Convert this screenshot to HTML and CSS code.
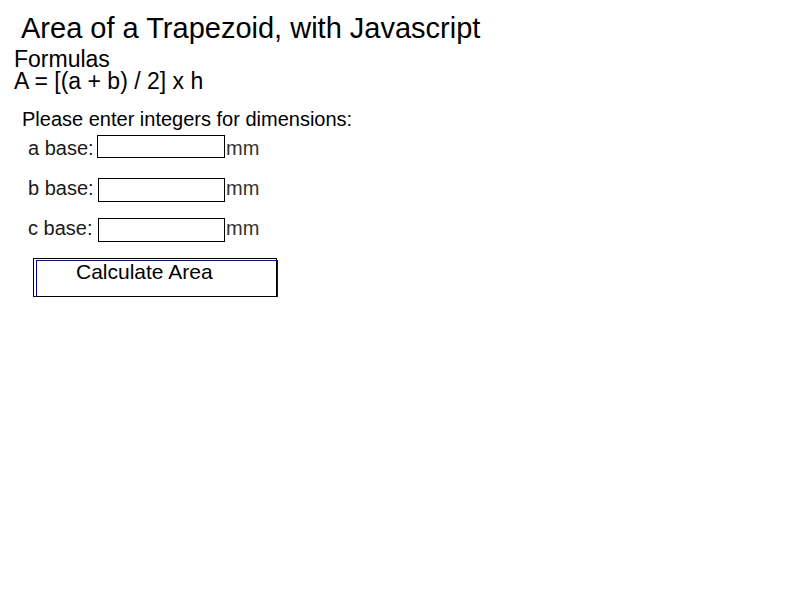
FILE: index.html
```html
<!DOCTYPE html>
<html lang="en">
<head>
<meta charset="utf-8">
<title>Area of a Trapezoid, with Javascript</title>
<link rel="stylesheet" href="styles.css">
</head>
<body>
<h1 class="title">Area of a Trapezoid, with Javascript</h1>
<div class="formulas">
  <div class="formulas-head">Formulas</div>
  <div class="formulas-line">A = [(a + b) / 2] x h</div>
</div>
<p class="prompt">Please enter integers for dimensions:</p>
<form class="dims">
  <label class="dim-label" for="a">a base:</label>
  <input class="dim-input dim-input-first" id="a" type="text">
  <span class="dim-unit">mm</span>
  <label class="dim-label" for="b">b base:</label>
  <input class="dim-input" id="b" type="text">
  <span class="dim-unit">mm</span>
  <label class="dim-label" for="c">c base:</label>
  <input class="dim-input" id="c" type="text">
  <span class="dim-unit">mm</span>
</form>
<div class="calc-wrap">
  <button class="calc" type="button">Calculate Area</button>
</div>
</body>
</html>
```
FILE: styles.css
```css
html, body {
  margin: 0;
  padding: 0;
  background: #fff;
}

body {
  font-family: "Liberation Sans", Arial, sans-serif;
  color: #000;
}

.title {
  margin: 0;
  padding: 12px 0 0 21px;
  font-size: 29px;
  font-weight: normal;
  line-height: 32px;
}

.formulas {
  margin-top: 3.5px;
  padding-left: 14px;
  font-size: 23px;
  line-height: 22.5px;
}

.prompt {
  margin: 14px 0 0;
  padding-left: 22px;
  font-size: 20px;
  line-height: 24px;
}

.dims {
  margin: 5px 0 0 28px;
  display: grid;
  grid-template-columns: 70px 127px auto;
  grid-auto-rows: 40px;
  justify-content: start;
  align-items: start;
  font-size: 20px;
  line-height: 24px;
}

.dim-label {
  color: #1a1a1a;
}

.dim-input {
  box-sizing: border-box;
  width: 127px;
  height: 24px;
  margin: 2px 0 0;
  padding: 0 2px;
  border: 1px solid #000;
  border-radius: 0;
  background: #fff;
  font: inherit;
  outline: none;
}

.dim-input-first {
  margin: -1px 0 0 -1px;
  width: 128px;
  height: 23px;
}

.dim-unit {
  margin-left: 1px;
  color: #333;
}

.calc-wrap {
  position: relative;
  width: 244px;
  margin: 2px 0 0 33px;
}

.calc-wrap::after {
  content: "";
  position: absolute;
  left: 3px;
  top: 2px;
  box-sizing: border-box;
  width: 242px;
  height: 40px;
  border: 1px solid #0000c0;
  pointer-events: none;
}

.calc {
  display: block;
  box-sizing: border-box;
  width: 244px;
  height: 39px;
  margin: 0;
  padding: 1px 0 13px 42px;
  border: 1px solid #000;
  border-radius: 0;
  background: #fff;
  color: #000;
  font-family: "Liberation Sans", Arial, sans-serif;
  font-size: 21px;
  line-height: 24px;
  text-align: left;
  -webkit-appearance: none;
  appearance: none;
}
```
